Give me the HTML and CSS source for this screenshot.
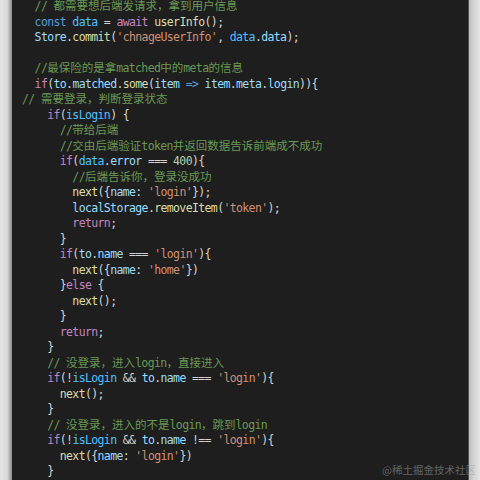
FILE: index.html
```html
<!DOCTYPE html>
<html lang="zh">
<head>
<meta charset="utf-8">
<title>code</title>
<link rel="stylesheet" href="styles.css">
</head>
<body>
<div class="frame">
  <div class="edge-l"></div>
  <div class="code">
<pre class="src">  <span class="c">// <span class="zh">都需要想后端发请求，拿到用户信息</span></span>
  <span class="s">const</span> <span class="cv">data</span> = <span class="k">await</span> <span class="f">userInfo</span>();
  <span class="v">Store</span>.<span class="f">commit</span>(<span class="str">'chnageUserInfo'</span>, <span class="cv">data</span>.<span class="v">data</span>);

  <span class="c">//<span class="zh">最保险的是拿</span>matched<span class="zh">中的</span>meta<span class="zh">的信息</span></span>
  <span class="k">if</span>(<span class="v">to</span>.<span class="v">matched</span>.<span class="f">some</span>(<span class="v">item</span> <span class="s">=&gt;</span> <span class="v">item</span>.<span class="v">meta</span>.<span class="v">login</span>)){
<span class="c">// <span class="zh">需要登录，判断登录状态</span></span>
    <span class="k">if</span>(<span class="cv">isLogin</span>) {
      <span class="c">//<span class="zh">带给后端</span></span>
      <span class="c">//<span class="zh">交由后端验证</span>token<span class="zh">并返回数据告诉前端成不成功</span></span>
      <span class="k">if</span>(<span class="cv">data</span>.<span class="v">error</span> === <span class="n">400</span>){
        <span class="c">//<span class="zh">后端告诉你，登录没成功</span></span>
        <span class="f">next</span>({<span class="v">name</span>: <span class="str">'login'</span>});
        <span class="v">localStorage</span>.<span class="f">removeItem</span>(<span class="str">'token'</span>);
        <span class="k">return</span>;
      }
      <span class="k">if</span>(<span class="v">to</span>.<span class="v">name</span> === <span class="str">'login'</span>){
        <span class="f">next</span>({<span class="v">name</span>: <span class="str">'home'</span>})
      }<span class="k">else</span> {
        <span class="f">next</span>();
      }
      <span class="k">return</span>;
    }
    <span class="c">// <span class="zh">没登录，进入</span>login<span class="zh">，直接进入</span></span>
    <span class="k">if</span>(!<span class="cv">isLogin</span> &amp;&amp; <span class="v">to</span>.<span class="v">name</span> === <span class="str">'login'</span>){
      <span class="f">next</span>();
    }
    <span class="c">// <span class="zh">没登录，进入的不是</span>login<span class="zh">，跳到</span>login</span>
    <span class="k">if</span>(!<span class="cv">isLogin</span> &amp;&amp; <span class="v">to</span>.<span class="v">name</span> !== <span class="str">'login'</span>){
      <span class="f">next</span>({<span class="v">name</span>: <span class="str">'login'</span>})
    }</pre>
  </div>
  <div class="edge-r"></div>
  <div class="watermark">@稀土掘金技术社区</div>
</div>
</body>
</html>
```
FILE: styles.css
```css
html, body {
  margin: 0;
  padding: 0;
  height: 100%;
}
body {
  background: #1e1e1e;
  overflow: hidden;
}
.frame {
  position: relative;
  display: flex;
  height: 480px;
}
.edge-l {
  width: 12px;
  flex: none;
  background: linear-gradient(to right, #e4e4e4 0, #dadada 60%, #8a8a8a 100%);
}
.edge-r {
  width: 11px;
  flex: none;
  border-left: 1px solid #505050;
  background: linear-gradient(to right, #bdbdbd 0, #d2d2d2 40%, #e6e6e6 100%);
}
.code {
  flex: 1;
  min-width: 0;
  background: #1e1e1e;
  padding-left: 10px;
  overflow: hidden;
}
.src {
  margin: -1px 0 0 0;
  font-family: "DejaVu Sans Mono", monospace;
  font-size: 11.5px;
  letter-spacing: -0.63px;
  line-height: 15.5px;
  color: #d4d4d4;
  white-space: pre;
}
.zh {
  font-family: "Noto Sans CJK SC", sans-serif;
  letter-spacing: 0;
  line-height: 0;
}
.c { color: #6a9955; }
.k { color: #c586c0; }
.s { color: #569cd6; }
.v { color: #9cdcfe; }
.cv { color: #4fc1ff; }
.f { color: #dcdcaa; }
.str { color: #ce9178; }
.n { color: #b5cea8; }
.watermark {
  position: absolute;
  right: 4px;
  bottom: 3px;
  font-family: "Noto Sans CJK SC", sans-serif;
  font-size: 10.5px;
  line-height: 14px;
  color: rgba(160, 160, 160, 0.55);
}
```
